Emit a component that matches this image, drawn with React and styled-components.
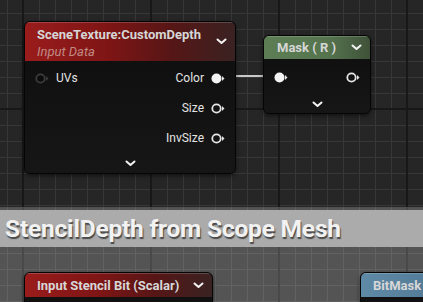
import styled, { createGlobalStyle } from "styled-components";

const GlobalStyle = createGlobalStyle`
  html, body {
    margin: 0;
    padding: 0;
    background: #262626;
  }
  body {
    font-family: Roboto, "Liberation Sans", sans-serif;
  }
`;

const headerColors = {
  red: "linear-gradient(90deg, #9a1c1c 0%, #7e1515 40%, #561616 70%, #3a2222 100%)",
  green: "linear-gradient(90deg, #5d7e55 0%, #55744e 60%, #3f5239 100%)",
  blue: "linear-gradient(90deg, #5f8aa6 0%, #4c7390 100%)",
};

export default function App() {
  return (
    <>
      <GlobalStyle />
      <Canvas>
        <Comment>
          <CommentBar>StencilDepth from Scope Mesh</CommentBar>
        </Comment>

        <Wire style={{ left: 224, top: 75, width: 52 }} />

        <Node $x={24} $y={21} $w={212}>
          <Header $color="red" $h={39}>
            <HeaderText>
              <Title>SceneTexture:CustomDepth</Title>
              <Subtitle>Input Data</Subtitle>
            </HeaderText>
            <Chevron />
          </Header>
          <Body>
            <PinRow>
              <Side>
                <Pin $dim />
                <PinLabel>UVs</PinLabel>
              </Side>
              <Side>
                <PinLabel>Color</PinLabel>
                <Pin $filled />
              </Side>
            </PinRow>
            <PinRow $end>
              <Side>
                <PinLabel>Size</PinLabel>
                <Pin />
              </Side>
            </PinRow>
            <PinRow $end>
              <Side>
                <PinLabel>InvSize</PinLabel>
                <Pin />
              </Side>
            </PinRow>
            <Footer $h={20}>
              <Chevron />
            </Footer>
          </Body>
        </Node>

        <Node $x={263} $y={35} $w={108}>
          <Header $color="green" $h={23} $center>
            <Title>Mask ( R )</Title>
            <Chevron />
          </Header>
          <Body $pad={0}>
            <PinRow $h={36}>
              <Pin $filled />
              <Pin />
            </PinRow>
            <Footer $h={18}>
              <Chevron />
            </Footer>
          </Body>
        </Node>

        <Node $x={24} $y={272} $w={189}>
          <Header $color="red" $h={24}>
            <Title>Input Stencil Bit (Scalar)</Title>
            <Chevron />
          </Header>
          <Body>
            <PinRow $h={30} />
          </Body>
        </Node>

        <Node $x={360} $y={272} $w={110}>
          <Header $color="blue" $h={24}>
            <Title>BitMask</Title>
          </Header>
          <Body>
            <PinRow $h={30} />
          </Body>
        </Node>
      </Canvas>
    </>
  );
}

function Chevron() {
  return (
    <ChevronIcon width="11" height="7" viewBox="0 0 11 7">
      <polyline points="1.5,1.5 5.5,5 9.5,1.5" fill="none" stroke="#f2f2f2" strokeWidth="2" strokeLinecap="round" strokeLinejoin="round" />
    </ChevronIcon>
  );
}

function Pin({ $filled, $dim }) {
  const stroke = $dim ? "#3c3c3c" : "#e6e6e6";
  return (
    <PinIcon width="14" height="11" viewBox="0 0 14 11">
      <circle cx="5.5" cy="5.5" r={$filled ? 5 : 4.2} fill={$filled ? "#f4f4f4" : $dim ? "#0c0c0c" : "none"} stroke={stroke} strokeWidth={$filled ? 0 : 1.8} />
      <polygon points="11,3 13.5,5.5 11,8" fill={stroke} />
    </PinIcon>
  );
}

const Canvas = styled.div`
  position: relative;
  width: 423px;
  height: 302px;
  overflow: hidden;
  background-color: #262626;
  background-image:
    linear-gradient(to right, #181818 2px, transparent 2px),
    linear-gradient(to bottom, #181818 2px, transparent 2px),
    linear-gradient(to right, #373737 1px, transparent 1px),
    linear-gradient(to bottom, #373737 1px, transparent 1px);
  background-size: 128px 128px, 128px 128px, 16px 16px, 16px 16px;
  background-position: 22px 0, 0 108px, 7px 0, 0 13px;
`;

const Comment = styled.div`
  position: absolute;
  left: -10px;
  right: -10px;
  top: 207px;
  bottom: -20px;
  padding-top: 2px;
  background: rgba(255, 255, 255, 0.215);
  border-top: 1px solid rgba(80, 80, 80, 0.6);
`;

const CommentBar = styled.div`
  height: 37px;
  display: flex;
  align-items: center;
  padding-left: 15px;
  background: #ababab;
  color: #f2f2f2;
  font-size: 24.5px;
  font-weight: 700;
  letter-spacing: -0.2px;
  text-shadow: 1px 2px 1px rgba(40, 40, 40, 0.75);
`;

const Wire = styled.div`
  position: absolute;
  height: 2px;
  background: #c9c9c9;
`;

const Node = styled.div`
  position: absolute;
  left: ${(p) => p.$x}px;
  top: ${(p) => p.$y}px;
  width: ${(p) => p.$w}px;
  border-radius: 6px;
  overflow: hidden;
  background: #121312;
  border: 1px solid #050505;
  box-sizing: border-box;
  box-shadow: 0 2px 4px rgba(0, 0, 0, 0.5);
`;

const Header = styled.div`
  height: ${(p) => p.$h}px;
  display: flex;
  align-items: center;
  justify-content: space-between;
  padding: 0 8px 0 12px;
  background: ${(p) => headerColors[p.$color]};
  box-shadow: inset 0 1px 0 rgba(255, 255, 255, 0.18);
  ${(p) => p.$center && "padding-left: 13px;"}
`;

const HeaderText = styled.div`
  display: flex;
  flex-direction: column;
  gap: 2px;
  padding-top: 2px;
`;

const Title = styled.div`
  color: #d6d6d6;
  font-size: 13px;
  font-weight: 700;
  white-space: nowrap;
`;

const Subtitle = styled.div`
  color: #c08a84;
  font-size: 13px;
  font-style: italic;
`;

const Body = styled.div`
  display: flex;
  flex-direction: column;
  padding-top: ${(p) => (p.$pad ?? 2)}px;
  background: linear-gradient(180deg, #0f100f 0%, #151615 100%);
`;

const PinRow = styled.div`
  height: ${(p) => p.$h ?? 30}px;
  display: flex;
  align-items: center;
  justify-content: ${(p) => (p.$end ? "flex-end" : "space-between")};
  padding: 0 10px;
`;

const Side = styled.div`
  display: flex;
  align-items: center;
  gap: 7px;
`;

const PinLabel = styled.span`
  color: #e4e4e4;
  font-size: 12px;
`;

const PinIcon = styled.svg`
  display: block;
  flex-shrink: 0;
`;

const Footer = styled.div`
  height: ${(p) => p.$h}px;
  display: flex;
  align-items: center;
  justify-content: center;
`;

const ChevronIcon = styled.svg`
  display: block;
  flex-shrink: 0;
`;
